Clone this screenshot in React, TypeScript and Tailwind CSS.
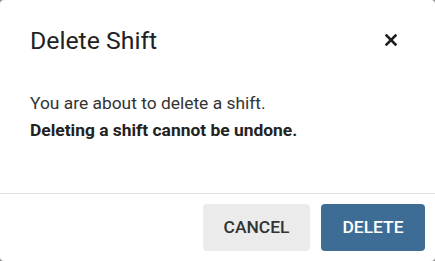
export default function App() {
  return (
    <div className="w-[435px] h-[261px] bg-[#8a8a8a]" style={{ fontFamily: "Roboto, 'Noto Sans', sans-serif" }}>
      <div className="flex h-full flex-col rounded-[4px] bg-white">
        <div className="flex items-start justify-between pt-[25px] pl-[30px] pr-[38px]">
          <h2 className="text-[24.8px] leading-[32px] font-normal text-[#222]">Delete Shift</h2>
          <svg width="12" height="12" viewBox="0 0 12 12" className="mt-[9px]">
            <path d="M1.5 1.5 L10.5 10.5 M10.5 1.5 L1.5 10.5" stroke="#1f1f1f" strokeWidth="2.6" strokeLinecap="square" />
          </svg>
        </div>
        <div className="flex-1 pt-[33px] px-[30px] text-[17.4px] leading-[27px] text-[#333]">
          <p>You are about to delete a shift.</p>
          <p className="font-bold text-[#222]">Deleting a shift cannot be undone.</p>
        </div>
        <div className="flex justify-end gap-[11px] border-t border-[#e0e0e0] p-[10px]">
          <button className="h-[47px] w-[107px] rounded-[4px] bg-[#ebebeb] text-[17.4px] font-medium uppercase text-[#333]">
            Cancel
          </button>
          <button className="h-[47px] w-[104px] rounded-[4px] bg-[#3d6d95] text-[17.4px] font-medium uppercase text-white">
            Delete
          </button>
        </div>
      </div>
    </div>
  );
}
